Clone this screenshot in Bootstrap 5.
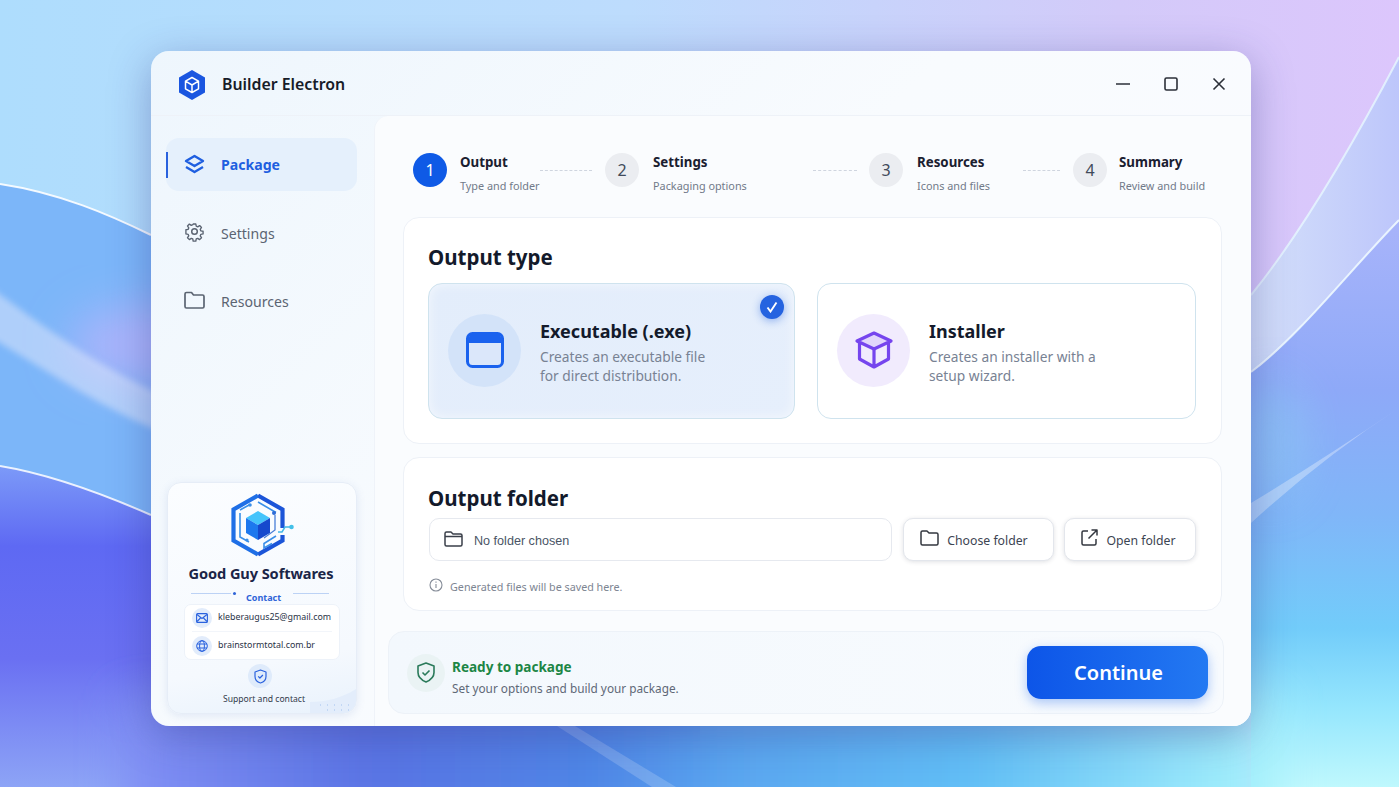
<!DOCTYPE html>
<html lang="en">
<head>
<meta charset="UTF-8">
<meta name="viewport" content="width=device-width, initial-scale=1.0">
<title>Builder Electron</title>
<link href="https://cdn.jsdelivr.net/npm/bootstrap@5.3.0/dist/css/bootstrap.min.css" rel="stylesheet">
<style>
html, body { height: 100%; }
body {
  font-family: "Noto Sans", "Open Sans", sans-serif;
  overflow: hidden;
  position: relative;
  background: #8fb8f8;
}
.wallpaper { position: absolute; inset: 0; width: 100%; height: 100%; }
.app-window {
  position: relative;
  width: 1100px; height: 675px;
  margin: 51px 0 0 151px;
  border-radius: 18px;
  background: linear-gradient(135deg, #eef6fd 0%, #f8fbfe 45%, #fbfbff 100%);
  box-shadow: 0 10px 42px rgba(45,45,130,.36);
  overflow: hidden;
}
.title-bar { height: 65px; padding: 2px 25px 0 26px; border-bottom: 1px solid #eef2f8; }
.app-logo { margin-top: 1px; }
.app-name { font-size: 15.85px; font-weight: 600; color: #171c28; margin: 1px 0 0 15px; }
.win-btn { display: block; margin-left: 34px; }
.body-row { height: 610px; }
.side-col { width: 223px; flex: none; padding: 22px 17px 12px 15px; }
.nav-entry { height: 53px; border-radius: 13px; padding-left: 18px; color: #5b6472; font-size: 14.1px; position: relative; }
.nav-entry svg { margin-right: 16px; }
.nav-plain svg { margin-top: -4px; }
.nav-active { background: #e5f0fc; color: #1f5fe0; font-weight: 700; }
.nav-active::before { content: ""; position: absolute; left: 0; top: 14px; bottom: 13px; width: 2px; background: #2a62de; }
.nav-second { margin-top: 16px; }
.nav-third { margin-top: 15px; }
.contact-box {
  margin: auto 0 0 1px; height: 232px; width: 190px; position: relative; overflow: hidden;
  border-radius: 14px; background: linear-gradient(170deg, #fbfdff 0%, #f5f9fe 75%, #e9f2fc 100%);
  border: 1px solid #e6edf7; box-shadow: 0 2px 8px rgba(90,120,190,.14);
  padding: 10px 16px 0; text-align: center;
}
.contact-corner { position: absolute; right: 0; bottom: 0; }
.brand-logo { display: block; margin: 0 auto; transform: translateX(1px); }
.brand-name { font-size: 14.6px; font-weight: 700; color: #1b2547; margin-top: 6px; line-height: 20px; letter-spacing: -.1px; white-space: nowrap; transform: translateX(-1px); }
.contact-head { font-size: 9px; font-weight: 700; color: #2f64d8; line-height: 12px; margin-top: 9px; padding-left: 7px; }
.rule-left, .rule-right { height: 1px; background: #bcd2f5; flex: none; margin-top: 1px; }
.rule-left { width: 40px; }
.rule-right { width: 36px; margin-left: 12px; }
.rule-dot { width: 3px; height: 3px; border-radius: 50%; background: #2f64d8; margin: 0 10px 0 2px; flex: none; }
.contact-list { background: #fff; border-radius: 7px; height: 56px; padding: 0 7px; border: 1px solid #edf2f9; position: relative; }
.contact-row { height: 26px; font-size: 8.85px; color: #2a3346; white-space: nowrap; }
.contact-row + .contact-row { height: 28px; border-top: 1px solid #f2f5fa; }
.round-mini { width: 20px; height: 20px; border-radius: 50%; background: #e2ecfb; margin-right: 6px; flex: none; }
.support-badge { width: 24px; height: 24px; border-radius: 50%; background: #dfebfb; margin: 4px auto 0; position: relative; transform: translateX(-2px); }
.support-text { font-size: 8.6px; color: #333b4b; margin-top: 5px; line-height: 12px; position: relative; transform: translateX(2px); }
.main-col { flex: 1; background: #fafcfe; border-top-left-radius: 14px; border-left: 1px solid #eff3f9; padding: 0 29px 0 28px; position: relative; }
.step-bar { height: 101px; padding: 37px 0 0 10px; }
.step-num { width: 34px; height: 34px; border-radius: 50%; background: #ebedf1; color: #414a5a; font-size: 16px; flex: none; }
.step-on { background: #0f5ae6; color: #fff; }
.step-text { margin-left: 13px; white-space: nowrap; }
.step-one { width: 80px; }
.step-two { width: 160px; margin-left: 14px; }
.step-three { width: 106px; margin-left: 14px; }
.step-four { margin-left: 12px; }
.step-title { font-size: 13.3px; font-weight: 700; color: #1a2030; line-height: 18px; }
.step-sub { font-size: 10.85px; color: #717a89; line-height: 16px; margin-top: 7px; }
.step-dash { border-top: 1px dashed #cfd5df; height: 0; margin-top: 17px; margin-right: 13px; }
.dash-one { width: 52px; }
.dash-two { width: 44px; margin-right: 12px; }
.dash-three { width: 37px; }
.panel-box { background: #fff; border: 1px solid #edf1f7; border-radius: 16px; padding: 0 24px; }
.panel-title { font-size: 20.5px; font-weight: 700; color: #131a2b; line-height: 28px; margin: 0; }
.panel-type { height: 227px; padding-top: 25px; }
.panel-folder { height: 154px; margin-top: 13px; padding-top: 26px; }
.pick-row { margin-top: 12px; gap: 22px; }
.pick-card { height: 136px; border-radius: 14px; border: 1px solid #cfe3ee; padding-left: 19px; position: relative; }
.pick-exe { width: 367px; background: linear-gradient(135deg, #e3edfb, #e6effc); box-shadow: inset 0 0 12px rgba(255,255,255,.6); }
.pick-inst { width: 379px; background: #fff; }
.pick-icon { width: 73px; height: 73px; border-radius: 50%; flex: none; margin: -2px 19px 0 0; }
.icon-blue { background: #d3e3f9; }
.icon-purple { background: #f1ebfd; }
.pick-name { font-size: 18px; font-weight: 700; color: #131a2b; line-height: 25px; padding-top: 2px; box-sizing: content-box; }
.pick-desc { font-size: 13.75px; color: #788293; line-height: 19px; margin-top: 3px; }
.pick-check { position: absolute; top: 11px; right: 10px; width: 24px; height: 24px; border-radius: 50%; background: #2563e0; box-shadow: 0 2px 8px rgba(37,99,224,.45); }
.folder-row { margin-top: 6px; gap: 11px; }
.folder-field { width: 463px; height: 43px; margin-left: 1px; border: 1px solid #e6e9ef; border-radius: 10px; padding: 3px 0 0 14px; font-family: "Liberation Sans", sans-serif; font-size: 12.6px; color: #4a5566; }
.folder-field svg { margin-right: 11px; margin-top: -5px; }
.folder-btn { height: 43px; background: #fff; border: 1px solid #e3e6ec; border-radius: 10px; font-size: 12.25px; color: #3c4452; box-shadow: 0 1px 4px rgba(60,70,90,.16); padding: 4px 0 0; }
.btn-choose { width: 151px; padding-right: 9px; }
.btn-open { width: 132px; margin-left: -1px; padding-right: 3px; }
.folder-btn svg { margin-right: 8px; margin-top: -8px; }
.hint-line { font-size: 10.75px; color: #7d8592; margin: 18px 0 0 1px; }
.hint-line svg { margin-right: 7px; margin-top: -7px; }
.foot-bar { position: absolute; left: 13px; right: 27px; top: 515px; height: 83px; border-radius: 16px; border: 1px solid #edf2f8; background: linear-gradient(90deg, #f3f8fd, #f8fbfe); padding: 0 15px 0 18px; }
.shield-round { width: 38px; height: 38px; border-radius: 50%; background: #eaf3f4; margin-right: 7px; flex: none; }
.ready-text { padding-top: 9px; }
.ready-title { font-size: 13.55px; font-weight: 700; color: #1c8645; line-height: 19px; }
.ready-sub { font-size: 11.8px; color: #5f6877; line-height: 17px; margin-top: 3px; }
.go-btn { width: 181px; height: 53px; border: 0; border-radius: 14px; background: linear-gradient(90deg, #0d55e8, #2379f2); color: #fff; font-size: 20px; font-weight: 600; box-shadow: 0 4px 12px rgba(25,100,235,.35); padding: 0 0 0 2px; }
</style>
</head>
<body>

<svg class="wallpaper" viewBox="0 0 1399 787" preserveAspectRatio="none" fill="none">
  <defs>
    <linearGradient id="skyFill" x1="0" x2="1" y1="0" y2="0"><stop offset="0" stop-color="#aeddfd"/><stop offset=".45" stop-color="#bddcfd"/><stop offset=".8" stop-color="#d3caf9"/><stop offset="1" stop-color="#dcc6fc"/></linearGradient>
    <linearGradient id="lowFill" x1="0" x2="0" y1="466" y2="787" gradientUnits="userSpaceOnUse"><stop offset="0" stop-color="#7c9af8"/><stop offset=".25" stop-color="#5e69f3"/><stop offset=".6" stop-color="#6a70f2"/><stop offset="1" stop-color="#8da4f6"/></linearGradient>
    <linearGradient id="stripFill" x1="151" x2="1251" y1="0" y2="0" gradientUnits="userSpaceOnUse"><stop offset="0" stop-color="#7f8ef4"/><stop offset=".2" stop-color="#5a74e4"/><stop offset=".4" stop-color="#4f86e6"/><stop offset=".52" stop-color="#5aa5f0"/><stop offset=".75" stop-color="#62bff6"/><stop offset="1" stop-color="#a4f0fc"/></linearGradient>
    <linearGradient id="rightFill" x1="0" x2="0" y1="220" y2="787" gradientUnits="userSpaceOnUse"><stop offset="0" stop-color="#a8b4fa"/><stop offset=".3" stop-color="#8ea9f8"/><stop offset=".52" stop-color="#80b6f8"/><stop offset=".72" stop-color="#72ccfa"/><stop offset=".86" stop-color="#95e6fd"/><stop offset="1" stop-color="#bff8fd"/></linearGradient>
    <linearGradient id="midFill" x1="1251" x2="1399" y1="0" y2="0" gradientUnits="userSpaceOnUse"><stop offset="0" stop-color="#d4e0fa"/><stop offset="1" stop-color="#bdc6fb"/></linearGradient>
    <filter id="softA" x="-50%" y="-50%" width="200%" height="200%"><feGaussianBlur stdDeviation="22"/></filter>
    <filter id="softB" x="-20%" y="-20%" width="140%" height="140%"><feGaussianBlur stdDeviation="3"/></filter>
  </defs>
  <rect width="1399" height="787" fill="url(#skyFill)"/>
  <path d="M0 184C60 193 110 215 151 235H700V787H0Z" fill="#7cb6f9"/>
  <ellipse cx="150" cy="345" rx="80" ry="40" fill="#aab4fb" filter="url(#softA)"/>
  <path d="M-30 272C40 325 105 372 170 398V436C95 405 50 372 -30 325Z" fill="#e3e8fb" opacity=".5" filter="url(#softB)"/>
  <path d="M0 466C55 475 110 497 151 515H700V787H0Z" fill="url(#lowFill)"/>
  <path d="M0 184C60 193 110 215 151 235" stroke="#fff" stroke-width="2" opacity=".9"/>
  <path d="M0 466C55 475 110 497 151 515" stroke="#fff" stroke-width="2" opacity=".85"/>
  <path d="M1399 57C1350 150 1300 235 1251 295V787H1399Z" fill="url(#midFill)"/>
  <path d="M1399 220C1350 270 1300 335 1251 372V787H1399Z" fill="url(#rightFill)"/>
  <ellipse cx="1270" cy="440" rx="35" ry="60" fill="#8cc4f4" opacity=".7" filter="url(#softA)"/>
  <rect x="125" y="700" width="1150" height="170" fill="url(#stripFill)" filter="url(#softA)"/>
  <path d="M557 726L575 726L676 787H652Z" fill="#fff" opacity=".18"/>
  <path d="M1251 503Q1322 460 1399 408Q1322 458 1251 523Z" fill="#fff" opacity=".32"/>
  <path d="M1399 57C1350 150 1300 235 1251 295" stroke="#e8fbff" stroke-width="2" opacity=".75"/>
  <path d="M1399 220C1350 270 1300 335 1251 372" stroke="#f2fdff" stroke-width="2" opacity=".85"/>
</svg>

<div class="app-window">
  <div class="title-bar d-flex align-items-center">
    <svg class="app-logo" width="30" height="32" viewBox="0 0 30 32"><path d="M15 1l13 7.500v15L15 31 2 23.500v-15z" fill="#1a56e0"/><path d="M15 8.500l6.500 3.700v7.600L15 23.500l-6.500-3.700v-7.600zM8.500 12.200L15 16l6.500-3.800M15 16v7.500" fill="none" stroke="#fff" stroke-width="1.500" stroke-linejoin="round"/></svg>
    <span class="app-name">Builder Electron</span>
    <div class="ms-auto d-flex align-items-center">
      <svg class="win-btn" width="14" height="14" viewBox="0 0 14 14"><path d="M0 7h14" stroke="#2b2f38" stroke-width="1.600"/></svg>
      <svg class="win-btn" width="14" height="14" viewBox="0 0 14 14"><rect x="1" y="1" width="12" height="12" rx="1.500" fill="none" stroke="#2b2f38" stroke-width="1.600"/></svg>
      <svg class="win-btn" width="14" height="14" viewBox="0 0 14 14"><path d="M1.500 1.500l11 11M12.500 1.500l-11 11" stroke="#2b2f38" stroke-width="1.600"/></svg>
    </div>
  </div>

  <div class="body-row d-flex">
    <div class="side-col d-flex flex-column">
      <div class="nav-entry nav-active d-flex align-items-center">
        <svg width="21" height="22" viewBox="0 0 21 22" fill="none" stroke="#1f5fe0" stroke-width="2.400" stroke-linejoin="round"><path d="M10.500 2L19 7l-8.500 5L2 7z"/><path d="M2 13l8.500 5 8.500-5"/></svg>
        Package
      </div>
      <div class="nav-entry nav-plain nav-second d-flex align-items-center">
        <svg width="21" height="21" viewBox="0 0 24 24" fill="none" stroke="#5b6472" stroke-width="1.700" stroke-linejoin="round"><circle cx="12" cy="12" r="3.200"/><path d="M10.300 2.500h3.400l.5 2.800 1.900.8 2.400-1.600 2.400 2.400-1.600 2.400.8 1.900 2.800.5v3.400l-2.800.5-.8 1.900 1.600 2.400-2.400 2.400-2.400-1.600-1.900.8-.5 2.800h-3.400l-.5-2.800-1.900-.8-2.400 1.600-2.400-2.400 1.600-2.400-.8-1.900-2.800-.5V9.800l2.800-.5.8-1.900-1.600-2.400 2.400-2.400 2.400 1.600 1.900-.8z" transform="translate(1.200 1.200) scale(.9)"/></svg>
        Settings
      </div>
      <div class="nav-entry nav-plain nav-third d-flex align-items-center">
        <svg width="21" height="18" viewBox="0 0 21 18" fill="none" stroke="#5b6472" stroke-width="1.700" stroke-linejoin="round"><path d="M1 3a1.500 1.500 0 0 1 1.500-1.500h5l2 2.500h9A1.500 1.500 0 0 1 20 5.500v10a1.500 1.500 0 0 1-1.500 1.500h-16A1.500 1.500 0 0 1 1 15.500z"/></svg>
        Resources
      </div>

      <div class="contact-box">
        <svg class="contact-corner" width="46" height="24" viewBox="0 0 46 24" fill="none">
          <path d="M46 0V24H0V13C16 13 32 9 46 0Z" fill="#e3edfb"/>
          <path d="M10 16h1M17 16h1M24 16h1M31 16h1M38 16h1M17 21h1M24 21h1M31 21h1M38 21h1" stroke="#b8d0f4" stroke-width="1.500"/>
        </svg>
        <svg class="brand-logo" width="66" height="64" viewBox="0 0 66 64" fill="none">
          <path d="M28 2.500L52.500 16.500V35M52.500 42V47.500L28 61.500" stroke="#1c55d8" stroke-width="4.200"/>
          <path d="M28 61.500L3.500 47.500V16.500L28 2.500" stroke="#1f6fe6" stroke-width="4.200"/>
          <path d="M28 9L46 19.500M10 20V44l9 5M20 11.500L10 17M46 43L34 50.500V55l8-4.500" stroke="#3a8fe8" stroke-width="1.600"/>
          <path d="M28 18l12 7-12 7-12-7z" fill="#45c4fb"/>
          <path d="M16 25l12 7v15l-12-7z" fill="#1d78ee"/>
          <path d="M40 25l-12 7v15l12-7z" fill="#1549cd"/>
          <path d="M45 22v15l-11 8" stroke="#4a7fd8" stroke-width="1.300"/>
          <path d="M48 39h4l3-5h6" stroke="#43b8e8" stroke-width="1.500"/>
          <circle cx="61.500" cy="34" r="2.300" fill="#43c0e8"/>
          <circle cx="44" cy="20" r="2" fill="#2f6cd6"/>
          <circle cx="20" cy="12" r="1.800" fill="#3a8fe8"/>
          <circle cx="17" cy="47" r="1.600" fill="#3a8fe8"/>
        </svg>
        <div class="brand-name">Good Guy Softwares</div>
        <div class="d-flex align-items-start contact-head">
          <span class="rule-left"></span><span class="rule-dot"></span><span>Contact</span><span class="rule-right"></span>
        </div>
        <div class="contact-list">
          <div class="contact-row d-flex align-items-center">
            <span class="round-mini d-flex align-items-center justify-content-center"><svg width="12" height="10" viewBox="0 0 12 10" fill="none" stroke="#2a62de" stroke-width="1.100"><rect x=".6" y=".6" width="10.800" height="8.800" rx="1"/><path d="M1 1.500l5 4 5-4M1 8.500l3.500-3.500M11 8.500L7.500 5"/></svg></span>
            kleberaugus25@gmail.com
          </div>
          <div class="contact-row d-flex align-items-center">
            <span class="round-mini d-flex align-items-center justify-content-center"><svg width="12" height="12" viewBox="0 0 12 12" fill="none" stroke="#2a62de" stroke-width="1"><circle cx="6" cy="6" r="5.300"/><ellipse cx="6" cy="6" rx="2.400" ry="5.300"/><path d="M1 4h10M1 8h10"/></svg></span>
            brainstormtotal.com.br
          </div>
        </div>
        <div class="support-badge d-flex align-items-center justify-content-center">
          <svg width="13" height="15" viewBox="0 0 13 15" fill="none" stroke="#2a62de" stroke-width="1.200" stroke-linejoin="round"><path d="M6.500 1L12 3v4.500c0 3.200-2.300 5.500-5.500 6.500C3.300 13 1 10.700 1 7.500V3z"/><path d="M4.200 7.300l1.700 1.700 3-3"/></svg>
        </div>
        <div class="support-text">Support and contact</div>
      </div>
    </div>

    <div class="main-col">
      <div class="step-bar d-flex align-items-start">
        <div class="step-num step-on d-flex align-items-center justify-content-center">1</div>
        <div class="step-text step-one"><div class="step-title">Output</div><div class="step-sub">Type and folder</div></div>
        <div class="step-dash dash-one"></div>
        <div class="step-num d-flex align-items-center justify-content-center">2</div>
        <div class="step-text step-two"><div class="step-title">Settings</div><div class="step-sub">Packaging options</div></div>
        <div class="step-dash dash-two"></div>
        <div class="step-num d-flex align-items-center justify-content-center">3</div>
        <div class="step-text step-three"><div class="step-title">Resources</div><div class="step-sub">Icons and files</div></div>
        <div class="step-dash dash-three"></div>
        <div class="step-num d-flex align-items-center justify-content-center">4</div>
        <div class="step-text step-four"><div class="step-title">Summary</div><div class="step-sub">Review and build</div></div>
      </div>

      <div class="panel-box panel-type">
        <h2 class="panel-title">Output type</h2>
        <div class="pick-row d-flex">
          <div class="pick-card pick-exe d-flex align-items-center">
            <div class="pick-icon icon-blue d-flex align-items-center justify-content-center">
              <svg width="38" height="36" viewBox="0 0 38 36" fill="none"><rect x="1.500" y="1.500" width="35" height="33" rx="5" fill="#dbe7fa" stroke="#1a62ee" stroke-width="3"/><path d="M3 11V5.500A3 3 0 0 1 6 2.500h26a3 3 0 0 1 3 3V11z" fill="#1a62ee"/></svg>
            </div>
            <div><div class="pick-name">Executable (.exe)</div><div class="pick-desc">Creates an executable file<br>for direct distribution.</div></div>
            <div class="pick-check d-flex align-items-center justify-content-center"><svg width="12" height="12" viewBox="0 0 12 12" fill="none" stroke="#fff" stroke-width="1.900"><path d="M1.500 6.500l3 4L10.500 1.500"/></svg></div>
          </div>
          <div class="pick-card pick-inst d-flex align-items-center">
            <div class="pick-icon icon-purple d-flex align-items-center justify-content-center">
              <svg width="40" height="38" viewBox="0 0 40 38" fill="none" stroke="#7645ee" stroke-width="3.200" stroke-linejoin="round"><path d="M20 2l17 8-17 8-17-8z" fill="#e2d6fb"/><path d="M5.500 11v17L20 36l14.500-8V11M20 18v18"/></svg>
            </div>
            <div><div class="pick-name">Installer</div><div class="pick-desc">Creates an installer with a<br>setup wizard.</div></div>
          </div>
        </div>
      </div>

      <div class="panel-box panel-folder">
        <h2 class="panel-title">Output folder</h2>
        <div class="folder-row d-flex">
          <div class="folder-field d-flex align-items-center">
            <svg width="19" height="16" viewBox="0 0 19 16" fill="none" stroke="#3a3f49" stroke-width="1.500" stroke-linejoin="round"><path d="M1 2.500A1.500 1.500 0 0 1 2.500 1h4.500l2 2h7.500A1.500 1.500 0 0 1 18 4.500v9a1.500 1.500 0 0 1-1.500 1.500h-14A1.500 1.500 0 0 1 1 13.500zM1 5.500h17"/></svg>
            No folder chosen
          </div>
          <button class="folder-btn btn-choose d-flex align-items-center justify-content-center">
            <svg width="19" height="16" viewBox="0 0 19 16" fill="none" stroke="#33373f" stroke-width="1.500" stroke-linejoin="round"><path d="M1 2.500A1.500 1.500 0 0 1 2.500 1h4.500l2 2h7.500A1.500 1.500 0 0 1 18 4.500v9a1.500 1.500 0 0 1-1.500 1.500h-14A1.500 1.500 0 0 1 1 13.500z"/></svg>
            Choose folder
          </button>
          <button class="folder-btn btn-open d-flex align-items-center justify-content-center">
            <svg width="17" height="17" viewBox="0 0 17 17" fill="none" stroke="#33373f" stroke-width="1.500" stroke-linejoin="round"><path d="M7 2H2.500A1.500 1.500 0 0 0 1 3.500v11A1.500 1.500 0 0 0 2.500 16h11a1.500 1.500 0 0 0 1.500-1.500V10M10.500 1H16v5.500M16 1L7.500 9.500"/></svg>
            Open folder
          </button>
        </div>
        <div class="hint-line">
          <svg width="14" height="14" viewBox="0 0 14 14" fill="none" stroke="#858c98" stroke-width="1.100"><circle cx="7" cy="7" r="6"/><path d="M7 6v4M7 3.500v1.200"/></svg>Generated files will be saved here.
        </div>
      </div>

      <div class="foot-bar d-flex align-items-center">
        <div class="shield-round d-flex align-items-center justify-content-center">
          <svg width="18" height="21" viewBox="0 0 18 21" fill="none" stroke="#2a7a5a" stroke-width="1.600" stroke-linejoin="round"><path d="M9 1l8 3v6.500c0 4.500-3.300 7.500-8 9.500-4.700-2-8-5-8-9.500V4z"/><path d="M5.500 10.500L8 13l4.500-4.500"/></svg>
        </div>
        <div class="ready-text">
          <div class="ready-title">Ready to package</div>
          <div class="ready-sub">Set your options and build your package.</div>
        </div>
        <button class="go-btn ms-auto">Continue</button>
      </div>
    </div>
  </div>
</div>

<script src="https://cdn.jsdelivr.net/npm/bootstrap@5.3.0/dist/js/bootstrap.bundle.min.js"></script>
</body>
</html>
